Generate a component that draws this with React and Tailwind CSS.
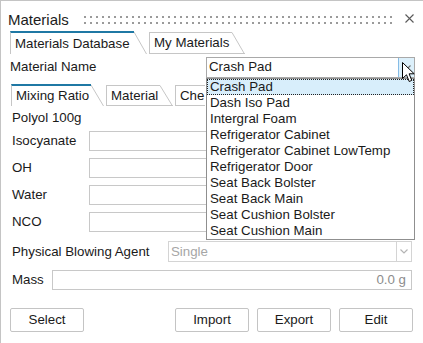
import { useState } from 'react';

const materials = [
    'Crash Pad',
    'Dash Iso Pad',
    'Intergral Foam',
    'Refrigerator Cabinet',
    'Refrigerator Cabinet LowTemp',
    'Refrigerator Door',
    'Seat Back Bolster',
    'Seat Back Main',
    'Seat Cushion Bolster',
    'Seat Cushion Main',
];

const fields = ['Isocyanate', 'OH', 'Water', 'NCO'];

const Slant = ({ active, h }) => (
    <svg width="13" height={h} className="shrink-0">
        <line x1="0" y1={active ? 1 : 0.5} x2="12.5" y2={h} stroke="#c6c6c6" strokeWidth="1" />
        {!active && <line x1="0" y1={h - 0.5} x2="13" y2={h - 0.5} stroke="#c6c6c6" strokeWidth="1" />}
    </svg>
);

const Tab = ({ label, active, bodyClass, h, noSlant }) => (
    <div className={active ? 'flex h-full' : 'flex h-full pt-[1px]'}>
        <div
            className={
                active
                    ? `${bodyClass} flex items-center border-l border-t-2 border-l-[#c6c6c6] border-t-[#1f78a4] bg-white pl-[4px] whitespace-nowrap overflow-hidden`
                    : `${bodyClass} flex items-center border-l border-t border-b border-[#c6c6c6] bg-white pl-[4px] whitespace-nowrap overflow-hidden`
            }
        >
            {label}
        </div>
        {!noSlant && <Slant active={active} h={active ? h : h - 1} />}
    </div>
);

const Chevron = ({ color }) => (
    <svg width="8" height="5" viewBox="0 0 8 5">
        <path d="M0.5 0.5 L4 4 L7.5 0.5" fill="none" stroke={color} strokeWidth="1.2" />
    </svg>
);

const App = () => {
    const [selected, setSelected] = useState('Crash Pad');

    return (
        <div
            className="relative w-[423px] h-[343px] overflow-hidden bg-white border-l border-t border-[#c4c4c4] text-[13.3px] text-[#1a1a1a]"
            style={{ fontFamily: '"Liberation Sans", Arial, sans-serif' }}
        >
            {/* title bar */}
            <div className="flex h-[30px] pl-[7px] pr-[9px]">
                <div className="mt-[10px] text-[15px] leading-[18px] text-[#1c1c1c]">Materials</div>
                <svg className="flex-1 ml-[15px] mt-[15px]" height="8">
                    <defs>
                        <pattern id="grip" width="6" height="6" patternUnits="userSpaceOnUse">
                            <rect x="0" y="0" width="2" height="2" fill="#9a9a9a" />
                        </pattern>
                    </defs>
                    <rect x="0" y="0" width="100%" height="8" fill="url(#grip)" />
                </svg>
                <svg className="ml-[10px] mt-[13px]" width="9" height="9" viewBox="0 0 9 9">
                    <path d="M0.5 0.5 L8.5 8.5 M8.5 0.5 L0.5 8.5" stroke="#5a5a5a" strokeWidth="1.1" />
                </svg>
            </div>

            {/* outer tabs */}
            <div className="flex h-[23px] pl-[9px] gap-[2px]">
                <Tab label="Materials Database" active bodyClass="w-[124px]" h={23} />
                <Tab label="My Materials" bodyClass="w-[83px]" h={23} />
            </div>

            {/* material name */}
            <div className="flex items-center mt-[3px] h-[20px] pl-[9px] pr-[8px]">
                <span>Material Name</span>
                <div className="ml-auto flex w-[209px] h-[21px] border border-[#a9a9a9] bg-white">
                    <div className="flex-1 flex items-center pl-[2px]">{selected}</div>
                    <div className="w-[16px] flex items-center justify-center bg-[#dcf0fb] border-l border-[#86bce6]">
                        <Chevron color="#707070" />
                    </div>
                </div>
            </div>

            {/* inner tabs */}
            <div className="flex mt-[7px] h-[22px] pl-[10px] gap-[2px]">
                <Tab label="Mixing Ratio" active bodyClass="w-[80px]" h={22} />
                <Tab label="Material" bodyClass="w-[54px]" h={22} />
                <Tab label="Che" bodyClass="w-[30px]" h={22} noSlant />
            </div>

            <div className="pl-[11px] pr-[11px]">
                <div className="mt-[4px] leading-[16px]">Polyol 100g</div>

                <div className="flex flex-col gap-[7px] mt-[5px]">
                    {fields.map((f) => (
                        <div key={f} className="flex items-center h-[20px]">
                            <span className="w-[77px] shrink-0">{f}</span>
                            <div className="flex-1 h-full border border-[#c8c8c8] bg-white" />
                        </div>
                    ))}
                </div>

                <div className="flex items-center mt-[9px] h-[21px]">
                    <span className="w-[156px] shrink-0">Physical Blowing Agent</span>
                    <div className="flex-1 h-full flex border border-[#d4d4d4] bg-white">
                        <div className="flex-1 flex items-center pl-[2px] text-[#a6a6a6]">Single</div>
                        <div className="w-[15px] flex items-center justify-center border-l border-[#d4d4d4]">
                            <Chevron color="#b4b4b4" />
                        </div>
                    </div>
                </div>

                <div className="flex items-center mt-[8px] h-[20px]">
                    <span className="w-[40px] shrink-0">Mass</span>
                    <div className="flex-1 h-full flex items-center justify-end pr-[5px] border border-[#c8c8c8] bg-white text-[#8c8c8c]">
                        0.0 g
                    </div>
                </div>
            </div>

            {/* buttons */}
            <div className="flex mt-[18px] pl-[9px] pr-[10px]">
                <button className="w-[74px] h-[24px] border border-[#c4c4c4] rounded-[2px] bg-white">Select</button>
                <div className="ml-auto flex gap-[8px]">
                    <button className="w-[74px] h-[24px] border border-[#c4c4c4] rounded-[2px] bg-white">Import</button>
                    <button className="w-[74px] h-[24px] border border-[#c4c4c4] rounded-[2px] bg-white">Export</button>
                    <button className="w-[74px] h-[24px] border border-[#c4c4c4] rounded-[2px] bg-white">Edit</button>
                </div>
            </div>

            {/* open dropdown list */}
            <ul className="absolute left-[205px] top-[77px] w-[209px] border border-[#8f8f8f] bg-white">
                {materials.map((m) => (
                    <li
                        key={m}
                        onClick={() => setSelected(m)}
                        className={
                            m === selected
                                ? 'h-[16px] leading-[14px] pl-[2px] bg-[#d8eefb] border border-dotted border-[#222]'
                                : 'h-[16px] leading-[16px] pl-[3px] whitespace-nowrap'
                        }
                    >
                        {m}
                    </li>
                ))}
            </ul>

            {/* mouse pointer */}
            <svg className="absolute left-[401px] top-[61px]" width="14" height="22" viewBox="0 0 14 22">
                <path d="M0.5 0.5 L0.5 16.5 L4.5 12.8 L7.2 19.5 L9.8 18.4 L7.1 11.8 L12.2 11.8 Z" fill="#ffffff" stroke="#000000" strokeWidth="1" strokeLinejoin="miter" />
            </svg>
        </div>
    );
};

export default App;
